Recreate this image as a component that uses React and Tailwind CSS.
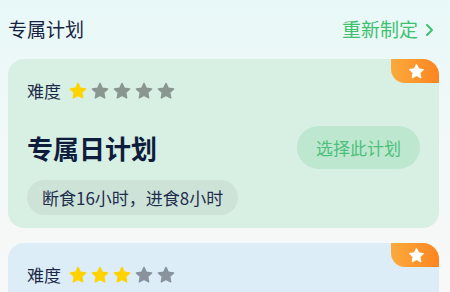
import React from "react";

const FONT = { fontFamily: '"Noto Sans CJK SC", "Noto Sans", sans-serif' };

function Star({ on, off }) {
  return (
    <svg width="18" height="18" viewBox="0 0 24 24">
      <path
        d="M12 1.8l3.1 6.5 7.1.9-5.2 4.9 1.3 7.1L12 17.8l-6.3 3.4 1.3-7.1-5.2-4.9 7.1-.9z"
        fill={on ? "#ffd200" : off}
        strokeLinejoin="round"
        stroke={on ? "#ffd200" : off}
        strokeWidth="1.8"
      />
    </svg>
  );
}

function Badge() {
  return (
    <div className="absolute top-0 right-0 w-[48px] h-[24px] rounded-bl-[14px] rounded-tr-[16px] bg-gradient-to-r from-[#fbaa3c] to-[#fd8420] flex items-center justify-end pr-[14px]">
      <svg width="17" height="17" viewBox="0 0 24 24">
        <path
          d="M12 2.5l2.9 6 6.6.8-4.9 4.6 1.2 6.6L12 17.3l-5.8 3.2 1.2-6.6-4.9-4.6 6.6-.8z"
          fill="#fff"
          stroke="#fff"
          strokeWidth="2"
          strokeLinejoin="round"
        />
      </svg>
    </div>
  );
}

function Card({ bg, level, off, title, btnBg, tagBg, tag }) {
  return (
    <div className={`relative rounded-[16px] ${bg} px-[19px] pt-[20px] pb-[13px]`}>
      <Badge />
      <div className="flex items-center gap-[4px]">
        <span className="text-[17px] text-[#1c2a48] leading-[24px] mr-[4px]">难度</span>
        {[1, 2, 3, 4, 5].map((i) => (
          <Star key={i} on={i <= level} off={off} />
        ))}
      </div>
      <div className="flex items-center justify-between mt-[23px]">
        <span className="text-[26px] font-bold text-[#0f1d3d] leading-[34px]">{title}</span>
        <button className={`h-[43px] px-[19px] rounded-full ${btnBg} text-[17px] text-[#4dc07b]`}>
          选择此计划
        </button>
      </div>
      <div className="mt-[11px] flex">
        <span className={`h-[35px] px-[15px] rounded-full ${tagBg} text-[17px] text-[#1f2d4c] flex items-center`}>
          {tag}
        </span>
      </div>
    </div>
  );
}

export default function App() {
  return (
    <div
      style={FONT}
      className="w-[450px] h-[292px] overflow-hidden bg-gradient-to-b from-[#e8f8f8] via-[#f3f8f8] to-[#f8f8f8]"
    >
      <div className="flex items-center justify-between pl-[8px] pr-[14px] h-[59px]">
        <span className="text-[19px] text-[#16223f]">专属计划</span>
        <span className="text-[19px] text-[#3fc06f] flex items-center gap-[6px]">
          重新制定
          <svg width="12" height="14" viewBox="0 0 12 14">
            <path d="M3 2l5 5-5 5" fill="none" stroke="#3fc06f" strokeWidth="2" strokeLinecap="round" strokeLinejoin="round" />
          </svg>
        </span>
      </div>
      <div className="flex flex-col gap-[15px] px-[8px] pr-[11px]">
        <Card
          bg="bg-[#d8efe3]"
          level={1}
          off="#8a9690"
          title="专属日计划"
          btnBg="bg-[#bee7d0]"
          tagBg="bg-[#cde3d8]"
          tag="断食16小时，进食8小时"
        />
        <Card
          bg="bg-[#dcedf7]"
          level={3}
          off="#88939b"
          title="专属周计划"
          btnBg="bg-[#c4e2ef]"
          tagBg="bg-[#cddfe9]"
          tag="断食16小时，进食8小时"
        />
      </div>
    </div>
  );
}
